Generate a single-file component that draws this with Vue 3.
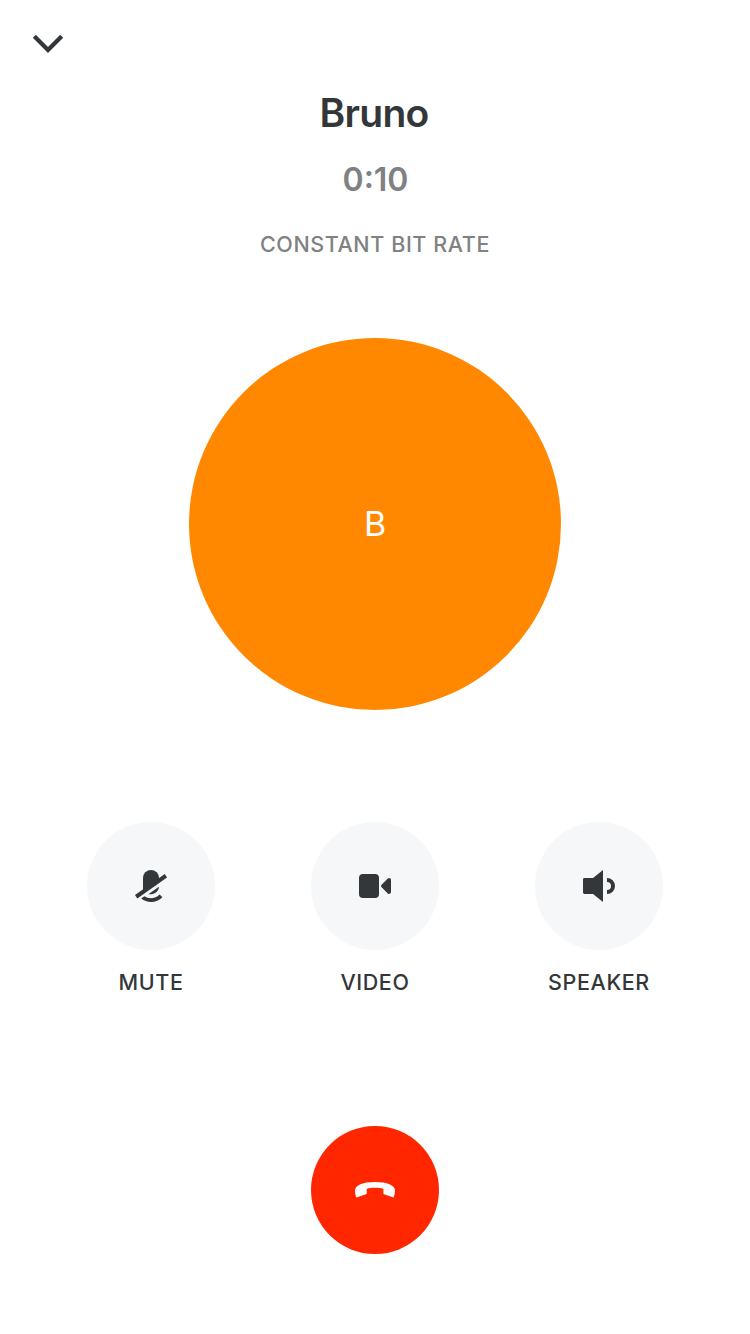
<script setup>
const controls = [
  { id: 'mute', label: 'MUTE' },
  { id: 'video', label: 'VIDEO' },
  { id: 'speaker', label: 'SPEAKER' },
]
</script>

<template>
  <main class="call">
    <header class="top">
      <button class="minimize" aria-label="Minimize">
        <svg width="32" height="20" viewBox="0 0 32 20">
          <path d="M2.3 2.3 16 16 29.7 2.3" fill="none" stroke="#33373a" stroke-width="4.3" />
        </svg>
      </button>
    </header>
    <h1 class="name">Bruno</h1>
    <p class="time">0:10</p>
    <p class="rate">CONSTANT BIT RATE</p>
    <div class="avatar">B</div>
    <div class="controls">
      <div v-for="c in controls" :key="c.id" class="control">
        <button class="round" :aria-label="c.label">
          <svg v-if="c.id === 'mute'" width="32" height="32" viewBox="0 0 32 32">
            <path d="M8 21V8a8 8 0 0 1 16 0v2L8.4 21Z" />
            <path d="M0 25 29.8 4 32 7.5 2.3 28.6Z" />
            <path d="M24 16.7C23.8 21.4 18.8 25.2 13.4 24.2L17.2 21.5Z" />
            <path d="M9.4 26.2 6.2 28.5C12 33.3 22 33.1 27.4 27.2L24.6 24.4C20.4 28.8 14 29.3 9.4 26.2Z" />
          </svg>
          <svg v-else-if="c.id === 'video'" width="32" height="32" viewBox="0 0 32 32">
            <rect y="4" width="20" height="24" rx="4" />
            <path d="M22.6 14.7 28.8 8.6C30 7.4 32 8.2 32 9.9v12.2c0 1.7-2 2.5-3.2 1.3l-6.2-6.1a1.8 1.8 0 0 1 0-2.6Z" />
          </svg>
          <svg v-else width="32" height="32" viewBox="0 0 32 32">
            <path d="M1.4 8H10L20 0v32L10 24H1.4A1.4 1.4 0 0 1 0 22.6V9.4A1.4 1.4 0 0 1 1.4 8Z" />
            <path d="M24 8a8 8 0 0 1 0 16v-4a4 4 0 0 0 0-8Z" />
          </svg>
        </button>
        <span class="label">{{ c.label }}</span>
      </div>
    </div>
    <button class="round hangup" aria-label="End call">
      <svg width="40" height="16" viewBox="0 0 40 16">
        <path d="M20 0C32 0 40 3.4 40 8.4c0 2.8-.6 5.2-1.5 7.1L28.4 11.9V6.9C24 5.5 16 5.5 11.7 6.9v5L1.5 15.5C.6 13.6 0 11.2 0 8.4 0 3.4 8 0 20 0Z" />
      </svg>
    </button>
  </main>
</template>

<style>
body {
  background: #fff;
}
</style>

<style scoped>
.call {
  box-sizing: border-box;
  width: 750px;
  height: 1334px;
  display: flex;
  flex-direction: column;
  align-items: center;
  background: #fff;
  color: #33373a;
  font-family: Inter, "Liberation Sans", sans-serif;
}
button {
  border: 0;
  padding: 0;
  background: none;
}
svg {
  display: block;
}
.top {
  width: 100%;
  height: 89px;
}
.minimize {
  margin: 34px 0 0 32px;
}
.name {
  margin: 0 2px 0 0;
  font-size: 39px;
  font-weight: 600;
  line-height: 48px;
  letter-spacing: -0.7px;
}
.time {
  margin: 23px 0 0 1px;
  font-size: 32px;
  font-weight: 600;
  line-height: 40px;
  color: #808182;
}
.rate {
  margin: 30px 0 0;
  font-size: 21.5px;
  font-weight: 550;
  line-height: 28px;
  letter-spacing: 0.6px;
  color: #808182;
}
.avatar {
  width: 372px;
  height: 372px;
  margin-top: 80px;
  border-radius: 50%;
  background: #ff8800;
  color: #fff;
  display: flex;
  align-items: center;
  justify-content: center;
  box-sizing: border-box;
  padding-bottom: 1px;
  font-size: 34px;
  font-weight: 400;
}
.controls {
  display: flex;
  gap: 96px;
  margin-top: 112px;
}
.control {
  width: 128px;
  display: flex;
  flex-direction: column;
  align-items: center;
}
.round {
  width: 128px;
  height: 128px;
  border-radius: 50%;
  background: #f5f7f9;
  fill: #33373a;
  display: flex;
  align-items: center;
  justify-content: center;
}
.label {
  margin-top: 18px;
  font-size: 21.5px;
  font-weight: 550;
  line-height: 28px;
  letter-spacing: 0.6px;
}
.hangup {
  margin-top: 130px;
  background: #ff2600;
  fill: #fff;
}
</style>
